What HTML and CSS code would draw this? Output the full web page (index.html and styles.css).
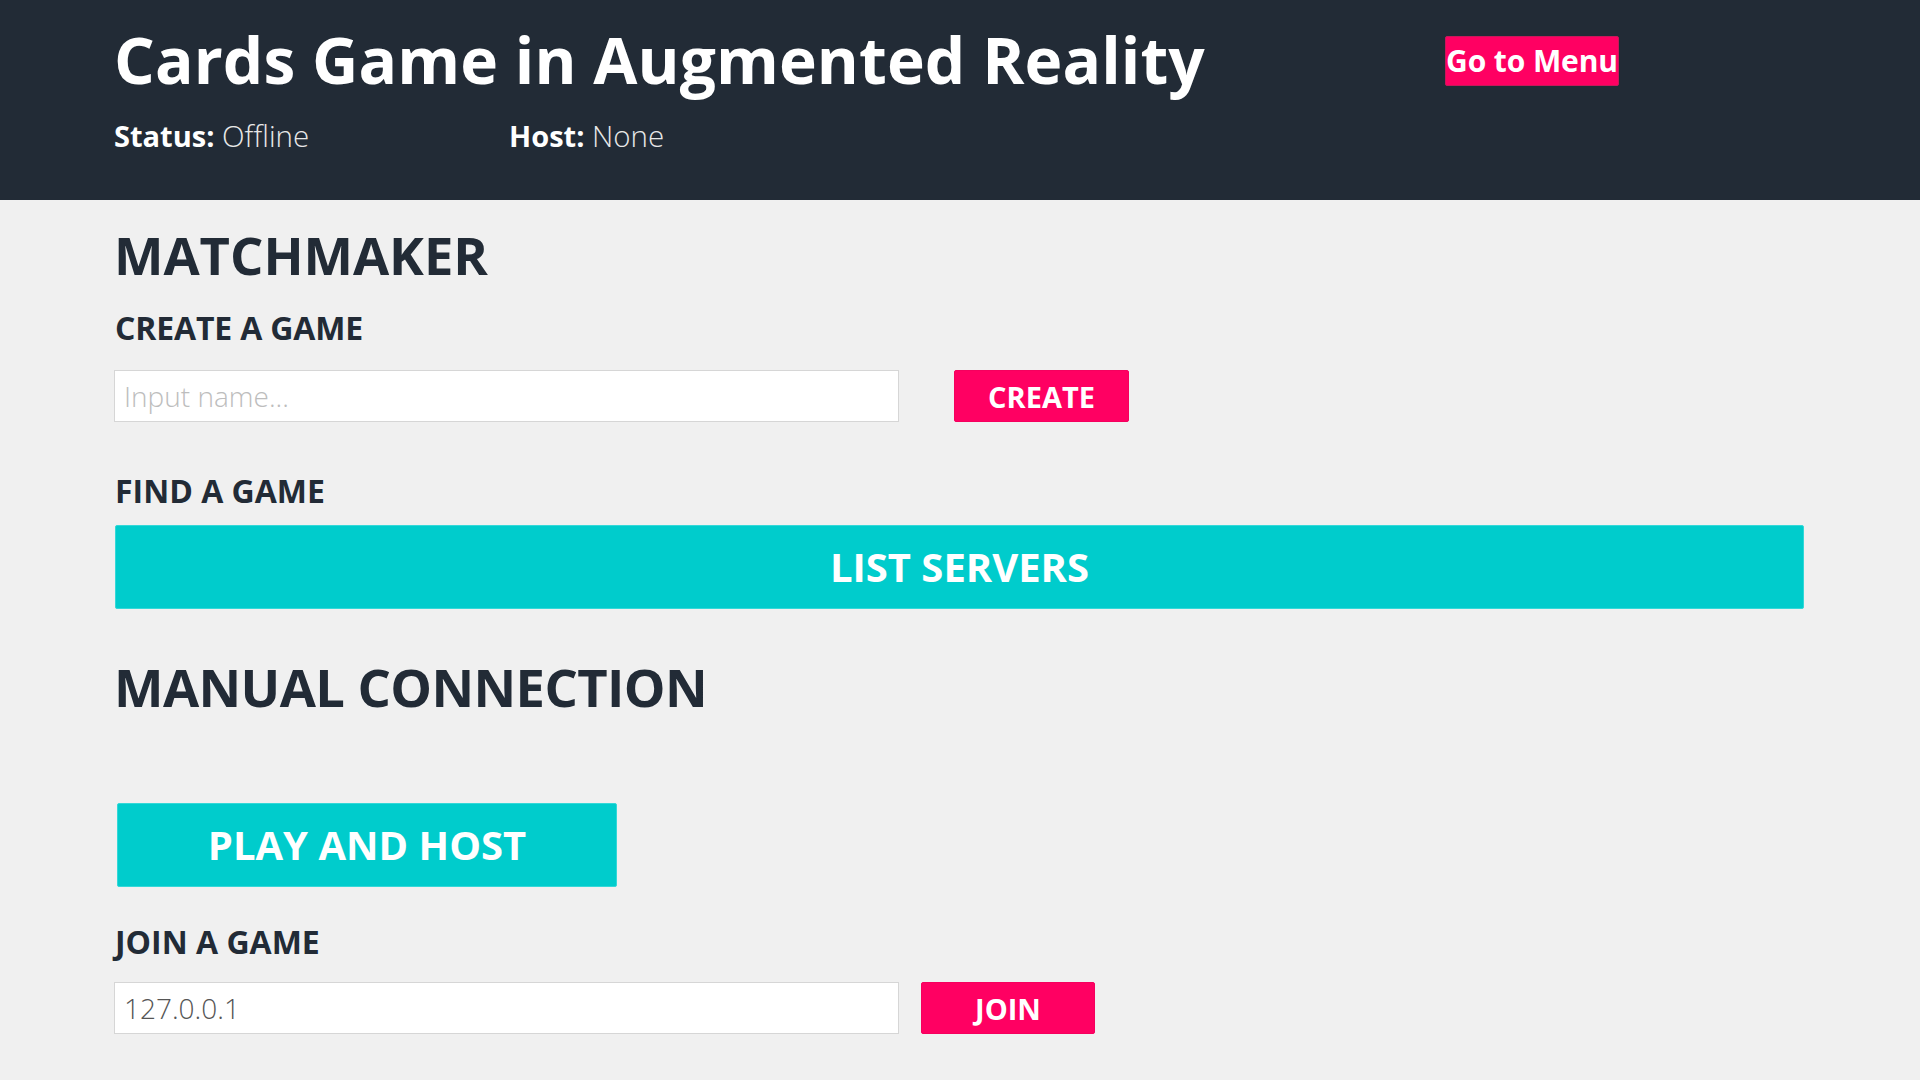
FILE: index.html
```html
<!DOCTYPE html>
<html lang="en">
<head>
<meta charset="utf-8">
<title>Cards Game in Augmented Reality</title>
<link rel="stylesheet" href="styles.css">
</head>
<body>
<header class="topbar">
  <div class="topbar-left">
    <h1 class="app-title">Cards Game in Augmented Reality</h1>
    <div class="status-row">
      <div class="status-item status-item--first"><b>Status:</b> <span class="light">Offline</span></div>
      <div class="status-item"><b>Host:</b> <span class="light">None</span></div>
    </div>
  </div>
  <div class="topbar-right">
    <button class="btn btn-pink btn-menu">Go to Menu</button>
  </div>
</header>
<main class="content">
  <h2 class="section-title">MATCHMAKER</h2>
  <h3 class="sub-title sub-create">CREATE A GAME</h3>
  <div class="form-row row-create">
    <input class="text-input" type="text" placeholder="Input name...">
    <button class="btn btn-pink btn-action btn-create">CREATE</button>
  </div>
  <h3 class="sub-title sub-find">FIND A GAME</h3>
  <button class="btn btn-cyan btn-list">LIST SERVERS</button>
  <h2 class="section-title section-manual">MANUAL CONNECTION</h2>
  <button class="btn btn-cyan btn-host">PLAY AND HOST</button>
  <h3 class="sub-title sub-join">JOIN A GAME</h3>
  <div class="form-row row-join">
    <input class="text-input" type="text" value="127.0.0.1">
    <button class="btn btn-pink btn-action btn-join">JOIN</button>
  </div>
</main>
</body>
</html>
```
FILE: styles.css
```css
* { box-sizing: border-box; }
html, body {
  margin: 0;
  padding: 0;
  background: #f0f0f0;
  font-family: "Open Sans", "Noto Sans", sans-serif;
  color: #222b36;
}
body { width: 1920px; height: 1080px; overflow: hidden; }

.topbar {
  height: 200px;
  background: #222b36;
  color: #ffffff;
  display: grid;
  grid-template-columns: 1331px auto;
  padding-left: 114px;
}
.app-title {
  margin: 28px 0 0 0;
  font-size: 64px;
  line-height: 1;
  font-weight: 700;
  white-space: nowrap;
  letter-spacing: 0.1px;
}
.status-row {
  display: flex;
  margin-top: 29px;
  font-size: 29px;
  line-height: 1;
}
.status-item--first { width: 395px; }
.status-item b { font-weight: 700; }
.light { font-weight: 300; color: #e8e8e8; font-size: 29.5px; }

.topbar-right { padding-top: 36px; }

.btn {
  font-family: "Open Sans", "Noto Sans", sans-serif;
  font-weight: 700;
  color: #ffffff;
  border-radius: 2px;
  cursor: pointer;
  padding: 0;
  line-height: 1;
  white-space: nowrap;
}
.btn-pink { background: #ff0062; border: 1px solid #f5005e; }
.btn-cyan { background: #00cccc; border: 1px solid #33d8d8; }

.btn-menu {
  width: 174px;
  height: 50px;
  font-size: 30px;
  border-color: #c8185a;
  letter-spacing: -0.1px;
}

.content { padding: 28px 116px 0 115px; }

.section-title {
  margin: 0 0 0 -1px;
  height: 53px;
  font-size: 52.5px;
  line-height: 53px;
  font-weight: 700;
  letter-spacing: -0.05px;
}
.sub-title {
  margin: 0;
  font-size: 32px;
  line-height: 1;
  font-weight: 700;
}
.sub-create { margin-top: 31px; letter-spacing: -0.15px; }
.sub-find { margin-top: 53px; }
.section-manual { margin-top: 51px; letter-spacing: -0.6px; }
.sub-join { margin-top: 39px; }

.form-row { display: flex; align-items: stretch; height: 52px; margin-left: -1px; }
.row-create { margin-top: 26px; }
.row-join { margin-top: 24px; }

.text-input {
  width: 785px;
  height: 52px;
  border: 1px solid #d6d6d6;
  background: #ffffff;
  font-family: "Open Sans", "Noto Sans", sans-serif;
  font-size: 28px;
  font-weight: 300;
  color: #555555;
  padding: 0 0 0 9px;
  outline: none;
  border-radius: 0;
}
.text-input::placeholder { color: #bdbdbd; opacity: 1; }

.btn-action { width: 175px; height: 52px; font-size: 29px; }
.btn-create { margin-left: 55px; }
.btn-join { margin-left: 22px; width: 174px; }

.btn-list {
  display: block;
  width: 1689px;
  height: 84px;
  margin-top: 18px;
  font-size: 40px;
}
.btn-host {
  display: block;
  width: 500px;
  height: 84px;
  margin-top: 90px;
  margin-left: 2px;
  font-size: 40px;
}
```
